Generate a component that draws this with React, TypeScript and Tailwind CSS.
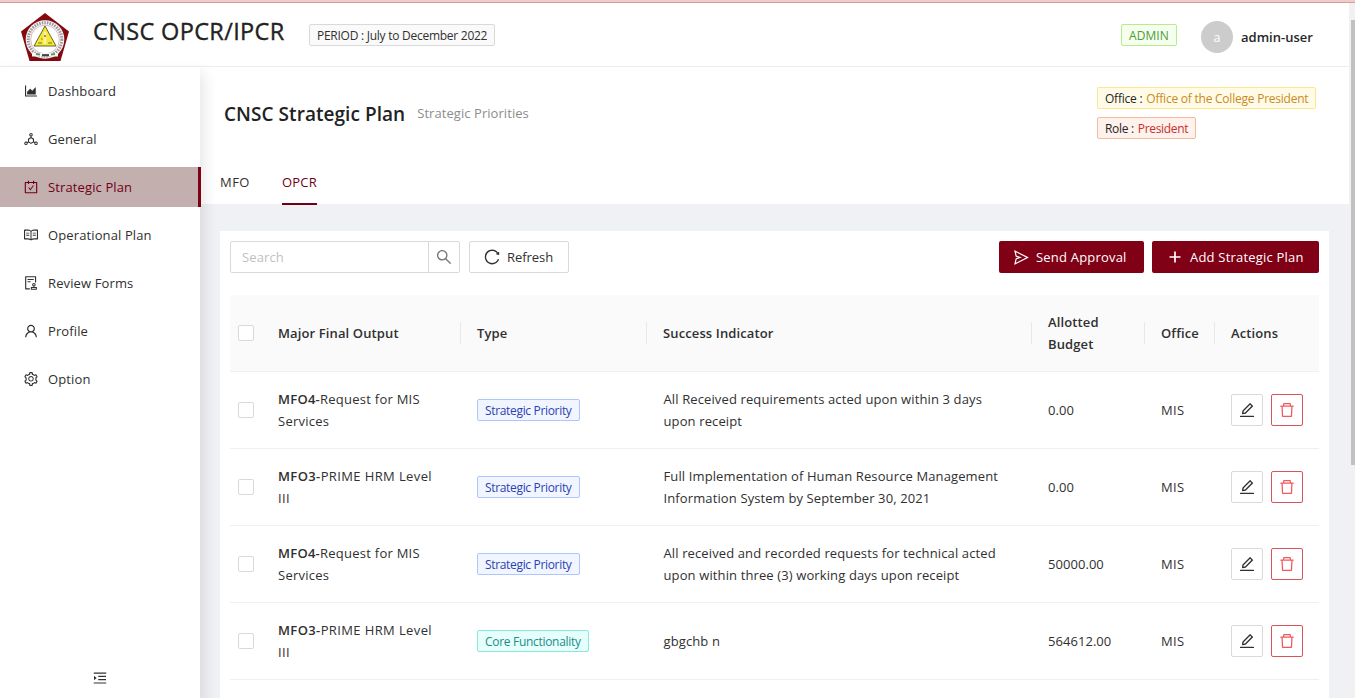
import React from "react";
import {
  AiOutlineAreaChart, AiOutlineDeploymentUnit, AiOutlineCarryOut, AiOutlineRead, AiOutlineAudit,
  AiOutlineUser, AiOutlineSetting, AiOutlineMenuUnfold, AiOutlineSearch, AiOutlineReload,
  AiOutlineSend, AiOutlineEdit, AiOutlineDelete,
} from "react-icons/ai";

const menu = [
  { label: "Dashboard", Icon: AiOutlineAreaChart },
  { label: "General", Icon: AiOutlineDeploymentUnit },
  { label: "Strategic Plan", Icon: AiOutlineCarryOut, active: true },
  { label: "Operational Plan", Icon: AiOutlineRead },
  { label: "Review Forms", Icon: AiOutlineAudit },
  { label: "Profile", Icon: AiOutlineUser },
  { label: "Option", Icon: AiOutlineSetting },
];

const rows = [
  { code: "MFO4", name: "Request for MIS", rest: "Services", type: "Strategic Priority", lines: ["All Received requirements acted upon within 3 days", "upon receipt"], budget: "0.00" },
  { code: "MFO3", name: "PRIME HRM Level", rest: "III", type: "Strategic Priority", lines: ["Full Implementation of Human Resource Management", "Information System by September 30, 2021"], budget: "0.00" },
  { code: "MFO4", name: "Request for MIS", rest: "Services", type: "Strategic Priority", lines: ["All received and recorded requests for technical acted", "upon within three (3) working days upon receipt"], budget: "50000.00" },
  { code: "MFO3", name: "PRIME HRM Level", rest: "III", type: "Core Functionality", lines: ["gbgchb n"], budget: "564612.00" },
];

const columns = "grid grid-cols-[32px_199px_186px_385px_113px_70px_104px] items-center";

function Logo() {
  return (
    <svg width="50" height="50" viewBox="0 0 50 50" className="shrink-0">
      <path d="M25 1 49 19.500 40.500 49H9.500L1 19.500Z" fill="#850a10" />
      <circle cx="25" cy="27.500" r="19.300" fill="#f8f6f6" />
      <circle cx="25" cy="27.500" r="16.800" fill="none" stroke="#9a979d" strokeWidth="3" strokeDasharray="1.500 1.100" />
      <circle cx="25" cy="27.500" r="14.300" fill="#fff" stroke="#cfa0a3" strokeWidth=".7" />
      <path d="M25 14 36 34H14Z" fill="#f3ea35" stroke="#57551f" strokeWidth=".9" />
      <path d="M18 31h4M28 31h4M21 27h1.500" stroke="#a19a28" strokeWidth="1.600" />
      <path d="M25 20v12" stroke="#f8f3b0" strokeWidth="2.600" />
      <circle cx="25" cy="24" r="1.100" fill="#c65d2a" />
      <path d="M12 41h9M29 41h9v3.500H12V41Z" fill="#f8f6f6" />
      <path d="M16 42l4 .6M31 42.600l4-.6" stroke="#4d9e6c" strokeWidth="2" />
      <path d="M22 43.200h7" stroke="#444" strokeWidth="2.200" />
    </svg>
  );
}

function Plus() {
  return (
    <svg viewBox="0 0 12 12" className="size-3 shrink-0"><path d="M6 .5v11M.5 6h11" stroke="currentColor" strokeWidth="1.700" /></svg>
  );
}

function Checkbox() {
  return <span className="ml-2 block size-4 rounded-[2px] border border-[#d9d9d9] bg-white" />;
}

function Tag({ className, children }: { className: string; children: React.ReactNode }) {
  return <span className={`inline-flex h-[22px] items-center whitespace-nowrap rounded-[2px] border px-[7px] text-[12px] ${className}`}>{children}</span>;
}

function HeadCell({ children, last }: { children: React.ReactNode; last?: boolean }) {
  return (
    <div className="flex items-center justify-between pl-4 font-semibold">
      <span>{children}</span>
      {!last && <span className="h-[22px] w-px bg-[#e8e8e8]" />}
    </div>
  );
}

export default function App() {
  return (
    <div className="flex h-[698px] w-[1355px] flex-col overflow-hidden bg-white font-['Open_Sans','Noto_Sans',sans-serif] text-[13px] leading-[22px] tracking-[0.12px] text-[#303030]">
      <div className="h-[3px] shrink-0 border-b border-[#c9a3a0] bg-[#f4c9c7]" />
      <div className="flex min-h-0 flex-1">
        <div className="flex min-w-0 flex-1 flex-col">
          <header className="flex h-16 shrink-0 items-center border-b border-[#ededed] pl-5">
            <div className="mt-[5px]"><Logo /></div>
            <h1 className="-mt-[7px] ml-[23px] w-[216px] whitespace-nowrap text-[23.5px] tracking-[0.35px] text-[#222] [-webkit-text-stroke:0.35px_#222]">CNSC OPCR/IPCR</h1>
            <Tag className="border-[#d9d9d9] bg-[#fafafa] pt-[2px] tracking-[-0.26px]">PERIOD : July to December 2022</Tag>
            <div className="ml-auto flex items-center pr-9">
              <Tag className="border-[#b7eb8f] bg-[#f6ffed] pt-[2px] text-[#4a9c3a]">ADMIN</Tag>
              <span className="ml-6 mt-1 flex size-8 items-center justify-center rounded-full bg-[#ccc] text-white">a</span>
              <span className="ml-2 mt-1 font-semibold tracking-[0.02px] text-[#262626]">admin-user</span>
            </div>
          </header>

          <div className="flex min-h-0 flex-1">
            <aside className="z-10 flex w-[200px] shrink-0 flex-col bg-white pt-1 shadow-[2px_8px_14px_2px_rgba(0,0,0,0.1)]">
              <nav className="flex flex-col gap-2">
                {menu.map(({ label, Icon, active }) => (
                  <div key={label} className={active ? "-mr-px flex h-10 items-center gap-[9px] border-r-[3px] border-[#800016] bg-[#c4afaf] pl-[23px] text-[#700016]" : "flex h-10 items-center gap-[9px] pl-[23px]"}>
                    <Icon className="size-4" />
                    <span>{label}</span>
                  </div>
                ))}
              </nav>
              <div className="mt-auto flex h-[41px] items-center justify-center"><AiOutlineMenuUnfold className="size-4" /></div>
            </aside>

            <main className="flex min-w-0 flex-1 flex-col bg-[#f0f1f5]">
              <section className="flex h-[137px] shrink-0 flex-col bg-white">
                <div className="flex justify-between pl-6 pr-8 pt-5">
                  <div className="flex items-center gap-3 pt-px">
                    <h2 className="whitespace-nowrap text-[19px] font-semibold leading-8 tracking-[0.05px] text-[#222]">CNSC Strategic Plan</h2>
                    <span className="-mt-[2px] tracking-[0.06px] text-[#8c8c8c]">Strategic Priorities</span>
                  </div>
                  <div className="flex w-[220px] flex-col items-start gap-2">
                    <Tag className="border-[#ffe58f] bg-[#fffbe6] pt-px tracking-[-0.23px] text-[#c98a25]"><span className="mr-[4px] text-[#262626]">Office :</span>Office of the College President</Tag>
                    <Tag className="border-[#f4bb9c] bg-[#fff1eb] pt-px tracking-[-0.32px] text-[#c7302b]"><span className="mr-[4px] text-[#262626]">Role :</span>President</Tag>
                  </div>
                </div>
                <div className="mt-auto flex h-[45px] gap-8 pl-5">
                  <span className="pt-3 tracking-[0.45px]">MFO</span>
                  <span className="-mb-px border-b-2 border-[#700016] pt-3 tracking-[0.25px] text-[#700016]">OPCR</span>
                </div>
              </section>

              <section className="ml-5 mr-5 mt-[27px] flex-1 bg-white px-[10px] pt-[10px]">
                <div className="flex h-8">
                  <div className="flex w-[230px] rounded-[2px] border border-[#d9d9d9]">
                    <span className="flex flex-1 items-center pl-[11px] text-[#bfbfbf]">Search</span>
                    <span className="flex w-[31px] items-center justify-center border-l border-[#d9d9d9] text-[#777]"><AiOutlineSearch className="size-[18px]" /></span>
                  </div>
                  <button className="ml-[9px] flex w-[100px] items-center gap-[6px] rounded-[2px] border border-[#d9d9d9] pl-[13px] tracking-[-0.05px]"><AiOutlineReload className="size-[18px]" />Refresh</button>
                  <button className="ml-auto flex w-[145px] items-center gap-[6px] rounded-[2px] bg-[#800016] pl-[14px] tracking-[0.2px] text-white"><AiOutlineSend className="size-[17px]" />Send Approval</button>
                  <button className="ml-2 flex w-[167px] items-center gap-[9px] rounded-[2px] bg-[#800016] pl-[17px] tracking-[0.2px] text-white"><Plus />Add Strategic Plan</button>
                </div>

                <div className="mt-[22px]">
                  <div className={`${columns} h-[77px] border-b border-[#f0f0f0] bg-[#fafafa]`}>
                    <Checkbox />
                    <HeadCell>Major Final Output</HeadCell>
                    <HeadCell>Type</HeadCell>
                    <HeadCell>Success Indicator</HeadCell>
                    <HeadCell>Allotted<br />Budget</HeadCell>
                    <HeadCell>Office</HeadCell>
                    <HeadCell last>Actions</HeadCell>
                  </div>
                  {rows.map((r, i) => (
                    <div key={i} className={`${columns} h-[77px] border-b border-[#f0f0f0]`}>
                      <Checkbox />
                      <div className={r.code === "MFO3" ? "whitespace-nowrap pl-4 tracking-[0.38px]" : "whitespace-nowrap pl-4 tracking-[0.25px]"}><span className="font-semibold">{r.code}-</span>{r.name}<br />{r.rest}</div>
                      <div className="flex pl-4">
                        <Tag className={r.type === "Core Functionality" ? "border-[#87e8de] bg-[#e6fffb] pt-px tracking-[-0.3px] text-[#218b8d]" : "border-[#adc6ff] bg-[#f0f5ff] pt-px tracking-[-0.33px] text-[#2c42b4]"}>{r.type}</Tag>
                      </div>
                      <div className="whitespace-nowrap pl-[16.500px]">{r.lines.map((l) => <div key={l}>{l}</div>)}</div>
                      <div className="pl-4 tracking-[0.05px]">{r.budget}</div>
                      <div className="pl-4 tracking-[0.35px]">MIS</div>
                      <div className="flex gap-2 pl-4">
                        <span className="flex size-8 items-center justify-center rounded-[2px] border border-[#d9d9d9]"><AiOutlineEdit className="size-[18px]" /></span>
                        <span className="flex size-8 items-center justify-center rounded-[2px] border border-[#d9545a] text-[#f05a5c]"><AiOutlineDelete className="size-[18px]" /></span>
                      </div>
                    </div>
                  ))}
                </div>
              </section>
            </main>
          </div>
        </div>
        <div className="flex w-[6px] shrink-0 justify-end bg-[#f1f1f1] pt-[17px]">
          <div className="h-[445px] w-1 bg-[#c1c1c1]" />
        </div>
      </div>
    </div>
  );
}
